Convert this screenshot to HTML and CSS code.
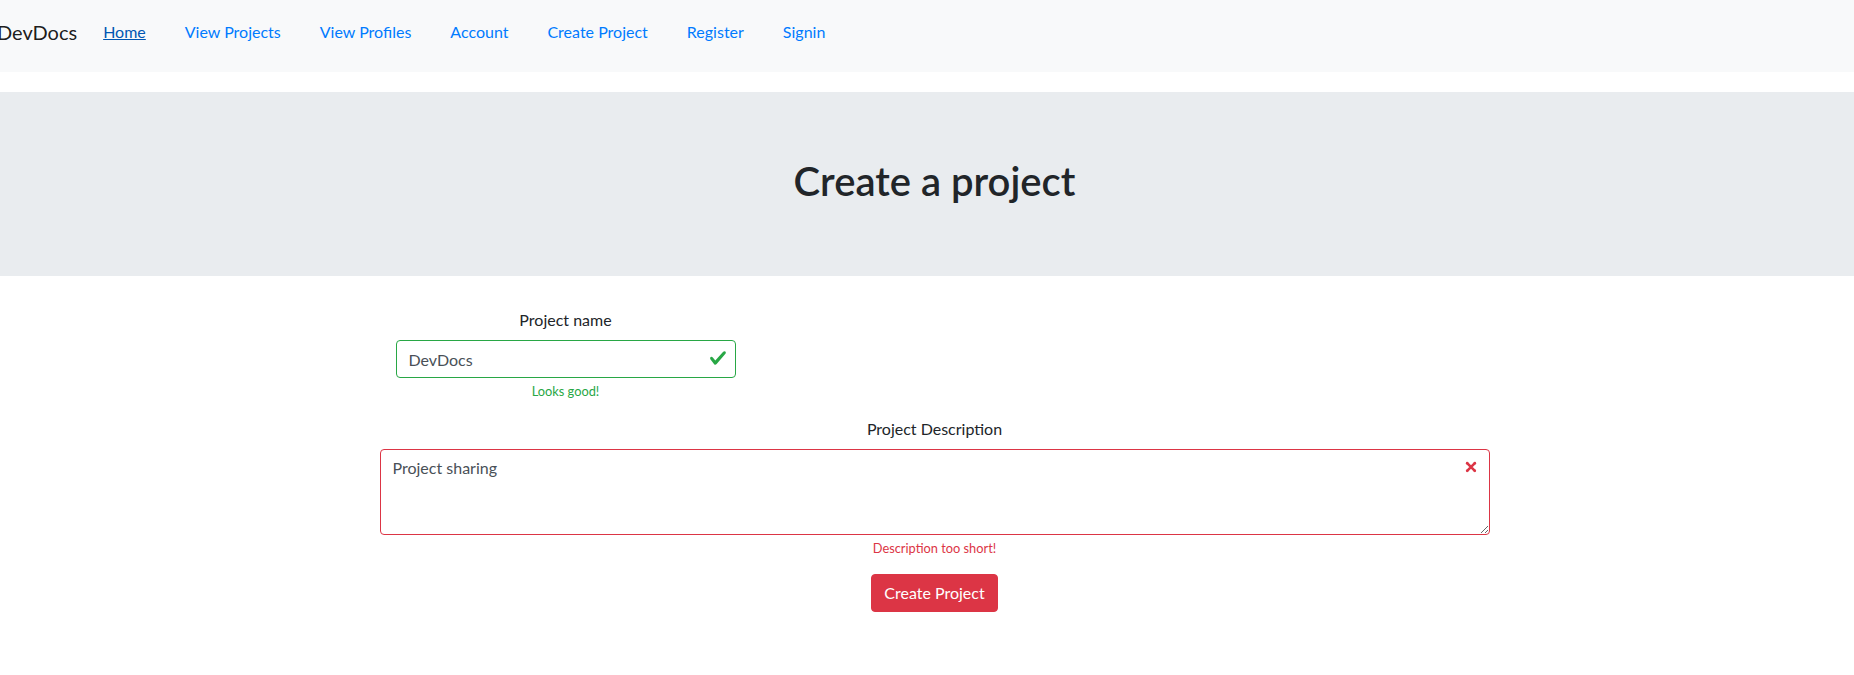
FILE: index.html
```html
<!DOCTYPE html>
<html lang="en">
<head>
<meta charset="utf-8">
<title>DevDocs - Create a project</title>
<link rel="stylesheet" href="styles.css">
</head>
<body>
<nav class="navbar">
  <a class="brand" href="#">DevDocs</a>
  <ul class="nav">
    <li><a class="nav-link active" href="#">Home</a></li>
    <li><a class="nav-link" href="#">View Projects</a></li>
    <li><a class="nav-link" href="#">View Profiles</a></li>
    <li><a class="nav-link" href="#">Account</a></li>
    <li><a class="nav-link" href="#">Create Project</a></li>
    <li><a class="nav-link" href="#">Register</a></li>
    <li><a class="nav-link" href="#">Signin</a></li>
  </ul>
</nav>
<div class="jumbotron">
  <h1 class="title">Create a project</h1>
</div>
<main class="page">
  <form class="container">
    <div class="form-group name-group">
      <label class="label" for="pname">Project name</label>
      <div class="field">
        <input class="control valid" id="pname" type="text" value="DevDocs">
        <svg class="state-icon icon-valid" viewBox="0 0 8 8" width="18" height="18" aria-hidden="true"><path fill="#28a745" d="M2.3 6.73L.6 4.53c-.4-1.04.46-1.4 1.1-.8l1.1 1.4 3.4-3.8c.6-.63 1.6-.27 1.2.7l-4 4.6c-.43.5-.8.4-1.1.1z"/></svg>
      </div>
      <div class="feedback ok">Looks good!</div>
    </div>
    <div class="form-group">
      <label class="label" for="pdesc">Project Description</label>
      <div class="field">
        <textarea class="control invalid" id="pdesc" rows="3">Project sharing</textarea>
        <svg class="state-icon icon-invalid" viewBox="-2 -2 7 7" width="18" height="18" aria-hidden="true"><g fill="#dc3545"><path stroke="#dc3545" d="M0 0l3 3m0-3L0 3"/><circle r=".5"/><circle cx="3" r=".5"/><circle cy="3" r=".5"/><circle cx="3" cy="3" r=".5"/></g></svg>
      </div>
      <div class="feedback bad">Description too short!</div>
    </div>
    <div class="actions">
      <button class="btn" type="button">Create Project</button>
    </div>
  </form>
</main>
</body>
</html>
```
FILE: styles.css
```css
* { box-sizing: border-box; }
html, body { margin: 0; padding: 0; }
body {
  font-family: Lato, "Open Sans", "Liberation Sans", sans-serif;
  font-size: 16px;
  font-weight: 400;
  line-height: 1.5;
  color: #212529;
  background: #fff;
}

/* navbar */
.navbar {
  display: flex;
  align-items: center;
  height: 72px;
  padding: 0 16px 8px 0;
  background: #f8f9fa;
}
.brand {
  margin-left: -3px;
  margin-right: 6px;
  font-size: 20px;
  line-height: 30px;
  color: rgba(0,0,0,.9);
  text-decoration: none;
}
.nav {
  display: flex;
  list-style: none;
  margin: 0;
  padding: 0;
}
.nav-link {
  display: block;
  padding: 0 19px 0 20px;
  line-height: 24px;
  color: #007bff;
  text-decoration: none;
}
.nav-link.active {
  color: #0056b3;
  text-decoration: underline;
}

/* jumbotron */
.jumbotron {
  margin-top: 20px;
  margin-bottom: 32px;
  padding: 65px 0 71px 15px;
  background: #e9ecef;
  text-align: center;
}
.title {
  margin: 0;
  font-size: 40px;
  font-weight: 600;
  line-height: 48px;
  color: #212529;
}

/* form */
.page { padding-left: 15px; }
.container {
  width: 1110px;
  margin: 0 auto;
}
.form-group {
  margin-bottom: 16px;
  text-align: center;
}
.name-group {
  width: 340px;
  margin-left: 16px;
}
.label {
  display: block;
  margin-bottom: 8px;
  font-weight: 400;
  line-height: 24px;
}
.field { position: relative; }
.control {
  display: block;
  width: 100%;
  padding: 6px 36px 6px 12px;
  font-family: inherit;
  font-size: 16px;
  line-height: 24px;
  color: #495057;
  background: #fff;
  border: 1px solid #ced4da;
  border-radius: 4px;
  outline: none;
  text-align: left;
}
input.control { height: 38px; }
textarea.control {
  height: 86px;
  resize: both;
}
.control.valid { border-color: #28a745; }
.control.invalid { border-color: #dc3545; }
.state-icon {
  position: absolute;
  display: block;
}
.icon-valid { top: 9px; right: 9px; }
.icon-invalid { top: 9px; right: 10px; }
.feedback {
  margin-top: 4px;
  font-size: 12.8px;
  line-height: 19.2px;
}
.feedback.ok { color: #28a745; }
.feedback.bad { color: #dc3545; }

.actions { text-align: center; }
.btn {
  display: inline-block;
  padding: 6px 12px;
  font-family: inherit;
  font-size: 16px;
  line-height: 24px;
  color: #fff;
  background: #dc3545;
  border: 1px solid #dc3545;
  border-radius: 4px;
  cursor: pointer;
}
```
